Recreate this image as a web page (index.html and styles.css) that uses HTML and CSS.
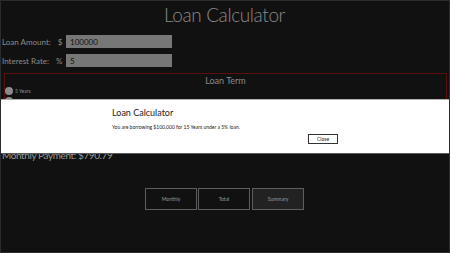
FILE: index.html
```html
<!DOCTYPE html>
<html lang="en">
<head>
  <meta charset="UTF-8">
  <meta name="viewport" content="width=device-width, initial-scale=1.0">
  <title>Loan Calculator</title>
  <link rel="stylesheet" href="styles.css">
</head>
<body>
  <div id="app">
    <h1 class="title">Loan Calculator</h1>
    <div class="row">
      <div class="caption"><label>Loan Amount:</label><span>$</span></div>
      <input type="text" class="field" value="100000">
    </div>
    <div class="row">
      <div class="caption"><label>Interest Rate:</label><span>%</span></div>
      <input type="text" class="field" value="5">
    </div>
    <div class="term">
      <div class="term-title">Loan Term</div>
      <div class="radio"><span class="dot"></span>5 Years</div>
      <div class="radio"><span class="dot"></span>10 Years</div>
      <div class="radio"><span class="dot"></span>15 Years</div>
      <div class="radio"><span class="dot"></span>30 Years</div>
    </div>
    <div class="payment">Monthly Payment: $790.79</div>
    <div class="buttons">
      <button>Monthly</button>
      <button>Total</button>
      <button class="active">Summary</button>
    </div>
  </div>

  <div class="dialog">
    <div class="dialog-body">
      <div class="dialog-title">Loan Calculator</div>
      <div class="dialog-text">You are borrowing $100,000 for 15 Years under a 5% loan.</div>
      <div class="dialog-actions">
        <button class="close">Close</button>
      </div>
    </div>
  </div>
</body>
</html>
```
FILE: styles.css
```css
html, body {
  margin: 0;
  height: 100%;
}

body {
  background-color: #111111;
  border: 1px solid #2c2c2c;
  box-sizing: border-box;
  font-family: 'Lato', sans-serif;
  color: #8c8c8c;
  overflow: hidden;
  position: relative;
}

#app {
  padding: 0 2px 0 1px;
}

.title {
  margin: 0;
  padding-top: 1px;
  font-size: 19px;
  font-weight: 300;
  letter-spacing: -0.4px;
  line-height: 26px;
  text-align: center;
  color: #8a8a8a;
}

.row {
  display: flex;
  align-items: center;
  height: 13px;
  margin-top: 7px;
  font-size: 8px;
}

.row + .row {
  margin-top: 6px;
}

.caption {
  display: flex;
  gap: 7px;
  width: 64px;
  white-space: nowrap;
}

.field {
  width: 106px;
  height: 13px;
  box-sizing: border-box;
  border: none;
  padding: 0 4px;
  background-color: #777777;
  color: #111111;
  font-family: 'Lato', sans-serif;
  font-size: 8px;
}

.term {
  margin: 6px 0 0 2px;
  height: 74px;
  border: 1px solid #5c0f0f;
  box-sizing: border-box;
}

.term-title {
  text-align: center;
  font-size: 9px;
  line-height: 10px;
  margin-top: 2px;
}

.radio {
  display: flex;
  align-items: center;
  gap: 2px;
  height: 10px;
  font-size: 5px;
  color: #8c8c8c;
}

.dot {
  width: 8px;
  height: 8px;
  border-radius: 50%;
  background-color: #8c8c8c;
}

.payment {
  margin-top: 1px;
  font-size: 10px;
  letter-spacing: -0.4px;
  line-height: 14px;
  color: #999999;
}

.buttons {
  display: flex;
  justify-content: center;
  gap: 1px;
  margin-top: 26px;
}

.buttons button {
  width: 52px;
  height: 22px;
  background-color: #111111;
  border: 1px solid #5e5e5e;
  color: #9a9a9a;
  font-family: 'Lato', sans-serif;
  font-size: 5px;
}

.buttons button.active {
  background-color: #222222;
  margin-left: 1px;
}

.dialog {
  position: absolute;
  left: -1px;
  right: -1px;
  top: 98px;
  height: 55px;
  background-color: #ffffff;
  border-top: 1px solid #b0b0b0;
  border-bottom: 1px solid #5a5a5a;
  box-sizing: border-box;
}

.dialog-body {
  width: 226px;
  margin: 0 auto 0 112px;
  color: #222222;
}

.dialog-title {
  margin-top: 7px;
  font-size: 9px;
  line-height: 12px;
}

.dialog-text {
  margin-top: 5px;
  font-size: 5px;
  line-height: 7px;
}

.dialog-actions {
  display: flex;
  justify-content: flex-end;
  margin-top: 3px;
}

.close {
  width: 30px;
  height: 10px;
  padding: 0;
  background-color: #ffffff;
  border: 1px solid #333333;
  font-family: 'Lato', sans-serif;
  font-size: 5px;
  color: #222222;
}
```
